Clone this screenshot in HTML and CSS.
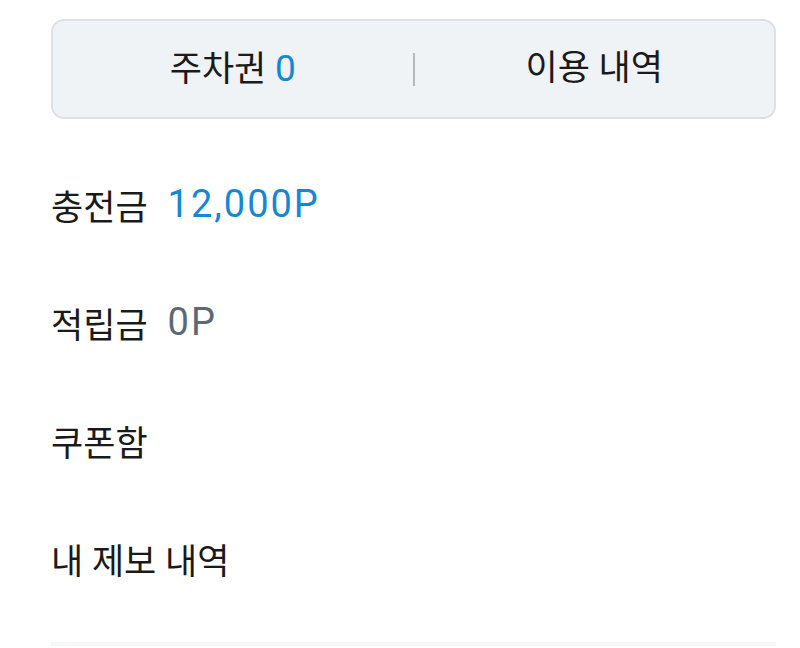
FILE: index.html
```html
<!DOCTYPE html>
<html lang="ko">
<head>
<meta charset="utf-8">
<link rel="stylesheet" href="styles.css">
</head>
<body>
<div class="page">
  <div class="ticket-box">
    <div class="half">주차권 <span class="num blue">0</span></div>
    <div class="divider"></div>
    <div class="half">이용 내역</div>
  </div>
  <ul class="menu">
    <li class="row">충전금 <span class="val blue">12,000P</span></li>
    <li class="row">적립금 <span class="val gray">0P</span></li>
    <li class="row">쿠폰함</li>
    <li class="row">내 제보 내역</li>
  </ul>
  <div class="bottom-line"></div>
</div>
</body>
</html>
```
FILE: styles.css
```css
html, body {
  margin: 0;
  padding: 0;
  background: #fff;
}
body {
  font-family: Roboto, "Noto Sans CJK KR", sans-serif;
  color: #1a1a1a;
}
.page {
  width: 800px;
  height: 648px;
  overflow: hidden;
  padding: 19px 24px 0 51px;
  box-sizing: border-box;
}
.ticket-box {
  height: 100px;
  box-sizing: border-box;
  border: 2px solid #dde1e5;
  border-radius: 13px;
  background: #f0f3f6;
  display: flex;
  align-items: center;
}
.half {
  flex: 1;
  text-align: center;
  font-size: 35px;
  line-height: 44px;
}
.num {
  font-size: 37px;
  font-weight: 400;
}
.divider {
  width: 2px;
  height: 33px;
  background: #b3b8bd;
}
.blue { color: #1487d6; }
.gray { color: #5d6875; }
.menu {
  list-style: none;
  margin: 26px 0 0;
  padding: 0;
}
.row {
  height: 118px;
  display: flex;
  align-items: center;
  font-size: 35px;
}
.val {
  margin-left: 20px;
  font-size: 38px;
  letter-spacing: 2px;
}
.bottom-line {
  margin-top: 25px;
  height: 4px;
  background: #f6f7f8;
}
```
